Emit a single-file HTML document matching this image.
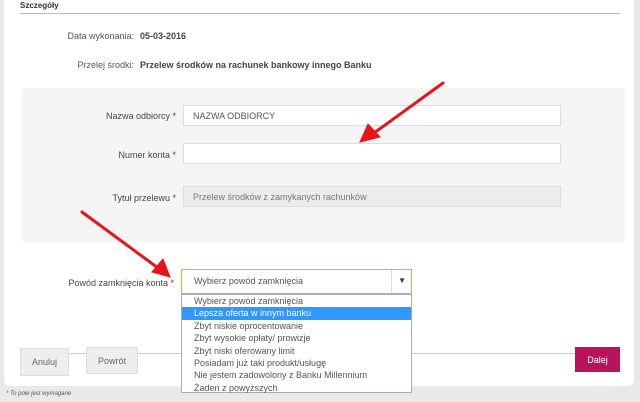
<!DOCTYPE html>
<html><head><style>
body{margin:0;width:640px;height:402px;background:#e9e9e9;font-family:"Liberation Sans",sans-serif;position:relative;overflow:hidden;color:#444}
.p{position:absolute;left:4px;top:-6px;width:630px;height:392px;background:#fff;border-radius:6px}
.a{position:absolute;font-size:9px;white-space:nowrap}
.r{text-align:right}
.in{position:absolute;background:#fff;border:1px solid #ddd;height:21px;box-sizing:border-box;font-size:9px;padding:5px 9px;color:#555}
.btn{position:absolute;background:#eee;border:1px solid #ddd;box-sizing:border-box;font-size:9px;color:#666;text-align:center;line-height:26px}
.li{height:12.4px;line-height:12.4px;padding-left:12px;font-size:9px;color:#555}
</style></head><body>
<div class="p"></div>
<div class="a" style="left:20px;top:1px;font-weight:bold;font-size:8px;color:#333">Szczegóły</div>
<div style="position:absolute;left:20px;top:13px;width:600px;height:1px;background:#bbb"></div>
<div class="a r" style="right:506px;top:31px;color:#555">Data wykonania:</div>
<div class="a" style="left:140px;top:31px;font-weight:bold;color:#444">05-03-2016</div>
<div class="a r" style="right:506px;top:60px;color:#555">Przelej środki:</div>
<div class="a" style="left:140px;top:60px;font-weight:bold;color:#444">Przelew środków na rachunek bankowy innego Banku</div>
<div style="position:absolute;left:22px;top:88px;width:603px;height:154px;background:#f5f5f5;border-radius:4px"></div>
<div class="a r" style="right:464px;top:111px">Nazwa odbiorcy *</div>
<div class="in" style="left:183px;top:105px;width:378px">NAZWA ODBIORCY</div>
<div class="a r" style="right:464px;top:150px">Numer konta *</div>
<div class="in" style="left:183px;top:143px;width:378px"></div>
<div class="a r" style="right:464px;top:193px">Tytuł przelewu *</div>
<div class="in" style="left:183px;top:186px;width:378px;background:#ececec;color:#777">Przelew środków z zamykanych rachunków</div>
<div class="a r" style="right:466px;top:278px">Powód zamknięcia konta *</div>
<div class="in" style="left:181px;top:269px;width:231px;height:25px;border:1px solid #f0a830;padding:6px 12px">Wybierz powód zamknięcia<span style="position:absolute;right:19px;top:0;width:1px;height:23px;background:#ddd"></span><span style="position:absolute;right:5px;top:6px;font-size:8px;color:#333">▼</span></div>
<div style="position:absolute;left:20px;top:353px;width:600px;height:1px;background:#ccc"></div>
<div class="btn" style="left:20px;top:348px;width:49px;height:28px">Anuluj</div>
<div class="btn" style="left:86px;top:347px;width:52px;height:27px">Powrót</div>
<div class="btn" style="left:575px;top:347px;width:45px;height:25px;background:#b8145c;border-color:#b8145c;color:#fff;line-height:24px">Dalej</div>
<div style="position:absolute;left:181px;top:294px;width:231px;height:99px;background:#fff;border:1px solid #aab;box-sizing:border-box">
<div class="li">Wybierz powód zamknięcia</div>
<div class="li" style="background:#3297fd;color:#fff">Lepsza oferta w innym banku</div>
<div class="li">Zbyt niskie oprocentowanie</div>
<div class="li">Zbyt wysokie opłaty/ prowizje</div>
<div class="li">Zbyt niski oferowany limit</div>
<div class="li">Posiadam już taki produkt/usługę</div>
<div class="li">Nie jestem zadowolony z Banku Millennium</div>
<div class="li">Żaden z powyższych</div>
</div>
<div class="a" style="left:6px;top:391px;font-size:6px;font-style:italic;color:#555">* To pole jest wymagane</div>
<svg style="position:absolute;left:0;top:0" width="640" height="402">
<g stroke="#e8141a" stroke-width="3" stroke-linecap="round" fill="#e8141a">
<line x1="443" y1="83" x2="374" y2="133"/>
<polygon points="360,142 368,124 380,137" stroke-width="1"/>
<line x1="82" y1="212" x2="158" y2="268"/>
<polygon points="170,277 152,272 163,259" stroke-width="1"/>
</g></svg>
</body></html>
